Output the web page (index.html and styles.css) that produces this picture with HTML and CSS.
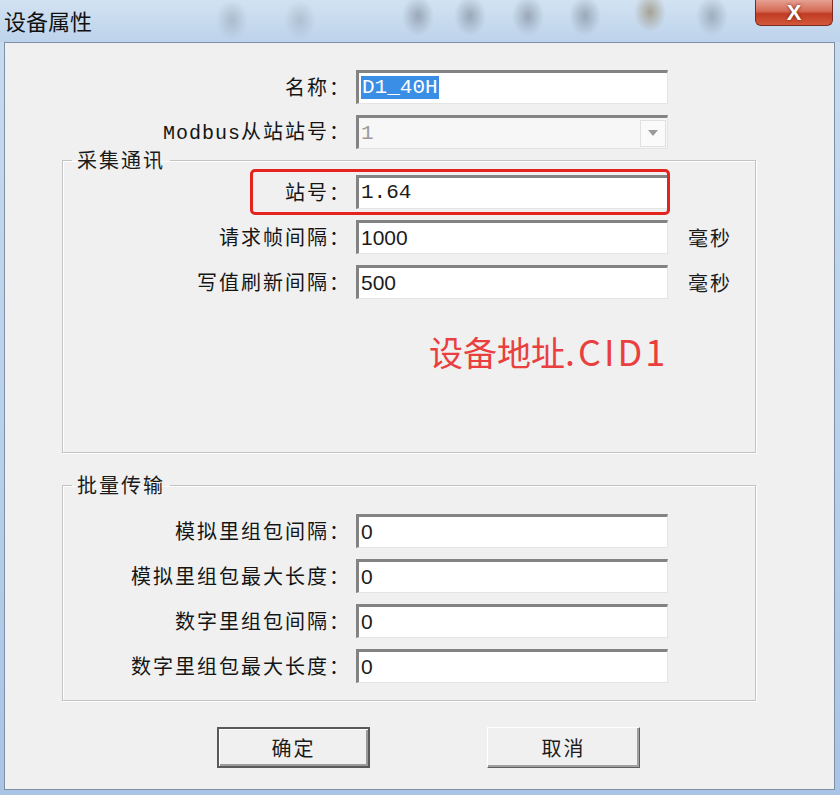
FILE: index.html
```html
<!DOCTYPE html>
<html lang="zh-CN">
  <head>
    <meta charset="UTF-8" />
    <title>设备属性</title>
    <link rel="stylesheet" href="styles.css">
  </head>
  <body>
    <div class="window">
      <div class="titlebar">
        <span class="title">设备属性</span>
        <button class="close">X</button>
      </div>

      <div class="client">
        <div class="row">
          <label>名称：</label>
          <div class="edit mono"><span class="sel">D1_40H</span></div>
        </div>
        <div class="row">
          <label><span class="latin">Modbus</span>从站站号：</label>
          <div class="edit combo mono">
            <span class="dim">1</span>
            <span class="drop"><svg width="10" height="6" viewBox="0 0 10 6"><path d="M0 0h10L5 6z" fill="#9a9a9a"/></svg></span>
          </div>
        </div>

        <fieldset class="group comm">
          <legend>采集通讯</legend>
          <div class="row marked">
            <label>站号：</label>
            <div class="edit mono">1.64</div>
            <span class="mark"></span>
          </div>
          <div class="row">
            <label>请求帧间隔：</label>
            <div class="edit">1000</div>
            <span class="unit">毫秒</span>
          </div>
          <div class="row">
            <label>写值刷新间隔：</label>
            <div class="edit">500</div>
            <span class="unit">毫秒</span>
          </div>
          <div class="note">设备地址<span class="note-latin">.CID1</span></div>
        </fieldset>

        <fieldset class="group batch">
          <legend>批量传输</legend>
          <div class="row">
            <label>模拟里组包间隔：</label>
            <div class="edit">0</div>
          </div>
          <div class="row">
            <label>模拟里组包最大长度：</label>
            <div class="edit">0</div>
          </div>
          <div class="row">
            <label>数字里组包间隔：</label>
            <div class="edit">0</div>
          </div>
          <div class="row">
            <label>数字里组包最大长度：</label>
            <div class="edit">0</div>
          </div>
        </fieldset>

        <div class="buttons">
          <button class="btn default">确定</button>
          <button class="btn">取消</button>
        </div>
      </div>
    </div>
  </body>
</html>
```

FILE: styles.css
```css
* {
  box-sizing: border-box;
}
body {
  margin: 0;
  font-family: "Noto Sans CJK SC", "Liberation Sans", sans-serif;
  color: #1b1b1b;
}
.window {
  width: 840px;
  height: 795px;
  background: linear-gradient(180deg, #c9dcef 0%, #b7cfe9 60%, #a9c4e4 100%);
  overflow: hidden;
}

.titlebar {
  height: 42px;
  display: flex;
  justify-content: space-between;
  align-items: flex-start;
  background:
    radial-gradient(ellipse 16px 20px at 232px 20px, rgba(120, 130, 145, 0.35), transparent),
    radial-gradient(ellipse 16px 20px at 300px 20px, rgba(120, 130, 145, 0.3), transparent),
    radial-gradient(ellipse 16px 20px at 418px 16px, rgba(95, 105, 120, 0.45), transparent),
    radial-gradient(ellipse 16px 20px at 470px 16px, rgba(95, 105, 120, 0.45), transparent),
    radial-gradient(ellipse 16px 20px at 528px 16px, rgba(95, 105, 120, 0.45), transparent),
    radial-gradient(ellipse 16px 20px at 585px 16px, rgba(95, 105, 120, 0.45), transparent),
    radial-gradient(ellipse 16px 20px at 650px 12px, rgba(130, 105, 60, 0.5), transparent),
    radial-gradient(ellipse 16px 20px at 712px 16px, rgba(95, 105, 120, 0.4), transparent),
    linear-gradient(180deg, #d2e2f2, #bcd3eb);
}
.title {
  margin: 6px 0 0 4px;
  font-size: 22px;
  line-height: 28px;
  color: #111;
}
.close {
  width: 78px;
  height: 26px;
  margin-right: 7px;
  border: 1px solid #7a2a20;
  border-top: 0;
  border-radius: 0 0 6px 6px;
  background: linear-gradient(180deg, #e6a192 0%, #d46a55 45%, #c03d24 55%, #d4583a 100%);
  color: #fff;
  font-family: "Liberation Sans", sans-serif;
  font-weight: bold;
  font-size: 22px;
  line-height: 24px;
  text-shadow: 0 0 3px #6b1a10;
  padding: 0;
}

.client {
  height: 748px;
  margin: 0 5px 0 4px;
  border: 1px solid #7d90a8;
  background: #f0f0f0;
  padding-top: 27px;
  --lw: 346px;
}

.row {
  display: grid;
  grid-template-columns: var(--lw) 312px auto;
  column-gap: 5px;
  align-items: center;
  height: 34px;
  position: relative;
}
.row + .row {
  margin-top: 11px;
}
label {
  text-align: right;
  font-size: 20px;
  letter-spacing: 2px;
  line-height: 30px;
  white-space: nowrap;
  color: #151515;
}
.latin {
  font-family: "Liberation Mono", monospace;
  letter-spacing: 1px;
}
.edit {
  height: 34px;
  background: #fff;
  border-top: 3px solid #838383;
  border-left: 3px solid #838383;
  border-right: 1px solid #e4e4e4;
  border-bottom: 1px solid #e4e4e4;
  padding-left: 2px;
  font-family: "Liberation Sans", sans-serif;
  font-size: 21px;
  line-height: 29px;
  color: #1b1b1b;
}
.edit.mono {
  font-family: "Liberation Mono", monospace;
}
.sel {
  background: #3a8ee6;
  color: #fff;
  padding: 0 1px;
}
.combo {
  display: flex;
  justify-content: space-between;
  align-items: center;
  background: #f7f7f7;
}
.dim {
  color: #9a9a9a;
}
.drop {
  width: 26px;
  height: 27px;
  margin-right: 1px;
  border: 1px solid #e0e0e0;
  background: #fafafa;
  display: flex;
  align-items: center;
  justify-content: center;
}
.unit {
  margin-left: 15px;
  font-size: 20px;
  letter-spacing: 2px;
}

.group {
  width: 694px;
  margin: 0 0 0 57px;
  border: 1px solid #c3c3c3;
  box-shadow: inset 1px 1px 0 #fff, 1px 1px 0 #fff;
  padding: 4px 0 0 0;
  --lw: 288px;
}
.group legend {
  margin-left: 9px;
  padding: 0 5px;
  font-size: 20px;
  letter-spacing: 2px;
  line-height: 22px;
}
.comm {
  height: 304px;
}
.batch {
  height: 227px;
  margin-top: 21px;
  padding-top: 18px;
}
.row.marked .mark {
  position: absolute;
  left: 187px;
  top: -6px;
  width: 420px;
  height: 46px;
  border: 3px solid #e4231c;
  border-radius: 5px;
}
.note {
  margin-top: 30px;
  padding-left: 366px;
  font-size: 34px;
  line-height: 42px;
  color: #ea3f3f;
}
.note-latin {
  font-size: 36px;
  letter-spacing: 3px;
}

.buttons {
  display: flex;
  gap: 117px;
  margin: 26px 0 0 212px;
}
.btn {
  width: 153px;
  height: 41px;
  background: #f0f0f0;
  border: 1px solid;
  border-color: #fff #5f5f5f #5f5f5f #fff;
  box-shadow: inset -2px -2px 0 #a0a0a0;
  font-family: "Noto Sans CJK SC", sans-serif;
  font-size: 20px;
  letter-spacing: 2px;
  color: #1b1b1b;
  padding: 0;
}
.btn.default {
  border: 2px solid #5a5a5a;
  box-shadow: inset 1px 1px 0 #fff, inset -2px -2px 0 #9a9a9a;
}
```
